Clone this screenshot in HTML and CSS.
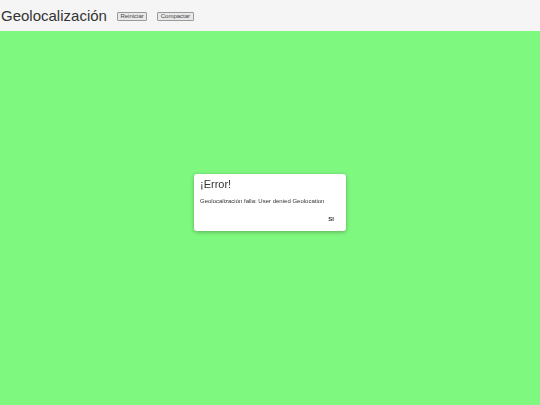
FILE: index.html
```html
<!DOCTYPE html>
<html lang="es">
<head>
<meta charset="utf-8">
<title>Geolocalización</title>
<link rel="stylesheet" href="styles.css">
</head>
<body>
<header class="topbar">
  <h1 class="title">Geolocalización</h1>
  <div class="actions">
    <button class="btn" type="button">Reiniciar</button>
    <button class="btn" type="button">Compactar</button>
  </div>
</header>
<main class="map"></main>
<div class="dialog" role="dialog">
  <h2 class="dialog-title">¡Error!</h2>
  <p class="dialog-body">Geolocalización falla: User denied Geolocation</p>
  <div class="dialog-actions">
    <button class="dialog-btn" type="button">SI</button>
  </div>
</div>
</body>
</html>
```
FILE: styles.css
```css
html, body {
  margin: 0;
  padding: 0;
  height: 100%;
}
body {
  display: flex;
  flex-direction: column;
  font-family: "Liberation Sans", Arial, sans-serif;
  color: #333;
  background: #7ff87f;
}
.topbar {
  height: 31px;
  flex: 0 0 31px;
  display: flex;
  align-items: center;
  background: #f5f5f5;
  gap: 10px;
}
.title {
  margin: 0;
  padding-left: 1px;
  font-size: 15px;
  font-weight: normal;
  line-height: 18px;
  color: #333;
}
.actions {
  display: flex;
  gap: 10px;
  padding-top: 1px;
}
.btn {
  font-family: "Liberation Sans", Arial, sans-serif;
  font-size: 6px;
  line-height: 7px;
  padding: 0 2.5px;
  margin: 0;
  border: 1px solid #999;
  border-radius: 1px;
  background: #e9e9e9;
  color: #444;
}
.map {
  flex: 1;
  background: #7ff87f;
}
.dialog {
  position: fixed;
  left: 194px;
  top: 174px;
  width: 152px;
  height: 57px;
  box-sizing: border-box;
  padding: 4px 6px 6px;
  background: #fff;
  border-radius: 3px;
  box-shadow: 0 1px 4px rgba(0, 0, 0, 0.3);
  display: flex;
  flex-direction: column;
}
.dialog-title {
  margin: 0;
  font-size: 11px;
  font-weight: normal;
  line-height: 13px;
  color: #333;
}
.dialog-body {
  margin: 6px 0 0;
  font-size: 6px;
  line-height: 8px;
  color: #333;
}
.dialog-actions {
  margin-top: auto;
  display: flex;
  justify-content: flex-end;
}
.dialog-btn {
  font-family: "Liberation Sans", Arial, sans-serif;
  font-size: 6px;
  font-weight: bold;
  line-height: 8px;
  padding: 0;
  margin: 0 6px 2px 0;
  border: none;
  background: transparent;
  color: #333;
}
```
